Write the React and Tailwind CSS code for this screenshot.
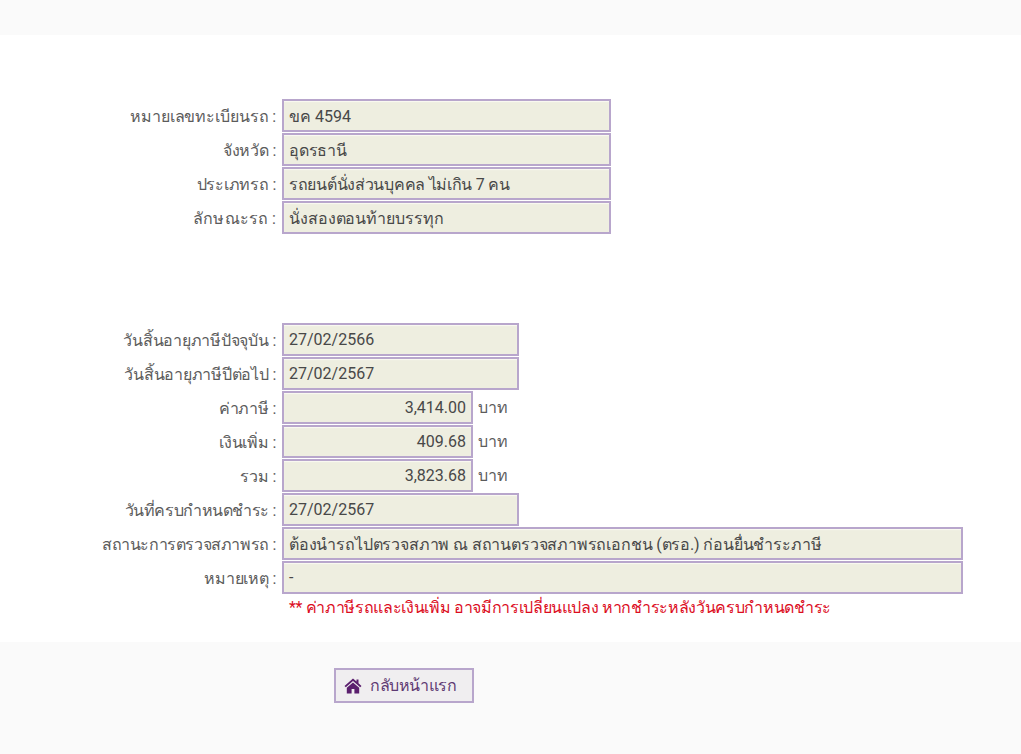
import React from 'react';

function Row({ label, value, width, right, unit, labelTrack = 'tracking-[-0.25px]', valueTrack = '' }) {
  return (
    <div className="flex items-start h-[34px]">
      <label className={`w-[276px] shrink-0 pt-[1px] text-right text-[16px] leading-[34px] text-[#5c5c5c] ${labelTrack}`}>
        {label} :
      </label>
      <div
        className={`ml-[6px] h-[33px] border-2 border-[#b8a6cc] bg-[#eeeee0] px-[5px] flex items-center text-[16px] text-[#484848] shadow-[inset_0_1px_1px_#fafaf2] whitespace-nowrap ${width} ${valueTrack} ${right ? 'justify-end' : ''}`}
      >
        {value}
      </div>
      {unit && <span className="ml-[5px] text-[16px] leading-[34px] text-[#5c5c5c]">{unit}</span>}
    </div>
  );
}

export default function App() {
  return (
    <div className="font-['Roboto',sans-serif] bg-white h-[754px] overflow-hidden flex flex-col">
      <div className="h-[35px] bg-[#fafafa]" />
      <div className="h-[607px] pt-[64px]">
        <Row label="หมายเลขทะเบียนรถ" labelTrack="tracking-[-0.12px]" value="ขค 4594" width="w-[329px]" valueTrack="pt-[2px]" />
        <Row label="จังหวัด" value="อุดรธานี" width="w-[329px]" valueTrack="pt-[2px] tracking-[-0.25px]" />
        <Row label="ประเภทรถ" value="รถยนต์นั่งส่วนบุคคล ไม่เกิน 7 คน" width="w-[329px]" valueTrack="pt-[2px] tracking-[-0.29px]" />
        <Row label="ลักษณะรถ" labelTrack="tracking-[0.1px]" value="นั่งสองตอนท้ายบรรทุก" width="w-[329px]" valueTrack="pt-[2px] tracking-[-0.1px]" />
        <div className="h-[88px]" />
        <Row label="วันสิ้นอายุภาษีปัจจุบัน" value="27/02/2566" width="w-[237px]" />
        <Row label="วันสิ้นอายุภาษีปีต่อไป" value="27/02/2567" width="w-[237px]" />
        <Row label="ค่าภาษี" value="3,414.00" width="w-[191px]" right unit="บาท" />
        <Row label="เงินเพิ่ม" value="409.68" width="w-[191px]" right unit="บาท" />
        <Row label="รวม" value="3,823.68" width="w-[191px]" right unit="บาท" />
        <Row label="วันที่ครบกำหนดชำระ" labelTrack="tracking-[-0.44px]" value="27/02/2567" width="w-[237px]" />
        <Row
          label="สถานะการตรวจสภาพรถ"
          labelTrack="tracking-[-0.39px]"
          value="ต้องนำรถไปตรวจสภาพ ณ สถานตรวจสภาพรถเอกชน (ตรอ.) ก่อนยื่นชำระภาษี"
          width="w-[681px]"
          valueTrack="pt-[2px] tracking-[-0.17px]"
        />
        <Row label="หมายเหตุ" value="-" width="w-[681px]" />
        <p className="ml-[289px] mt-[1px] text-[16px] leading-[24px] text-[#dc0d1e] tracking-[-0.34px]">
          ** ค่าภาษีรถและเงินเพิ่ม อาจมีการเปลี่ยนแปลง หากชำระหลังวันครบกำหนดชำระ
        </p>
      </div>
      <div className="flex-1 bg-[#fafafa] pt-[26px] pl-[334px]">
        <button className="h-[35px] w-[140px] border-2 border-[#b8a6cc] bg-[#f0eef0] flex items-center pl-[8px] text-[16px] text-[#5f3a73] tracking-[-0.4px]">
          <svg width="18" height="16" viewBox="0 0 18 16" fill="#5b1f6e">
            <path d="M9 0.5 L0.5 8 L1.8 9.3 L9 3 L16.2 9.3 L17.5 8 L14.5 5.3 V1.5 H12.5 V3.6 Z" />
            <path d="M2.8 9.8 L9 4.4 L15.2 9.8 V15.5 H10.4 V11 H7.6 V15.5 H2.8 Z" />
          </svg>
          <span className="ml-[8px]">กลับหน้าแรก</span>
        </button>
      </div>
    </div>
  );
}
